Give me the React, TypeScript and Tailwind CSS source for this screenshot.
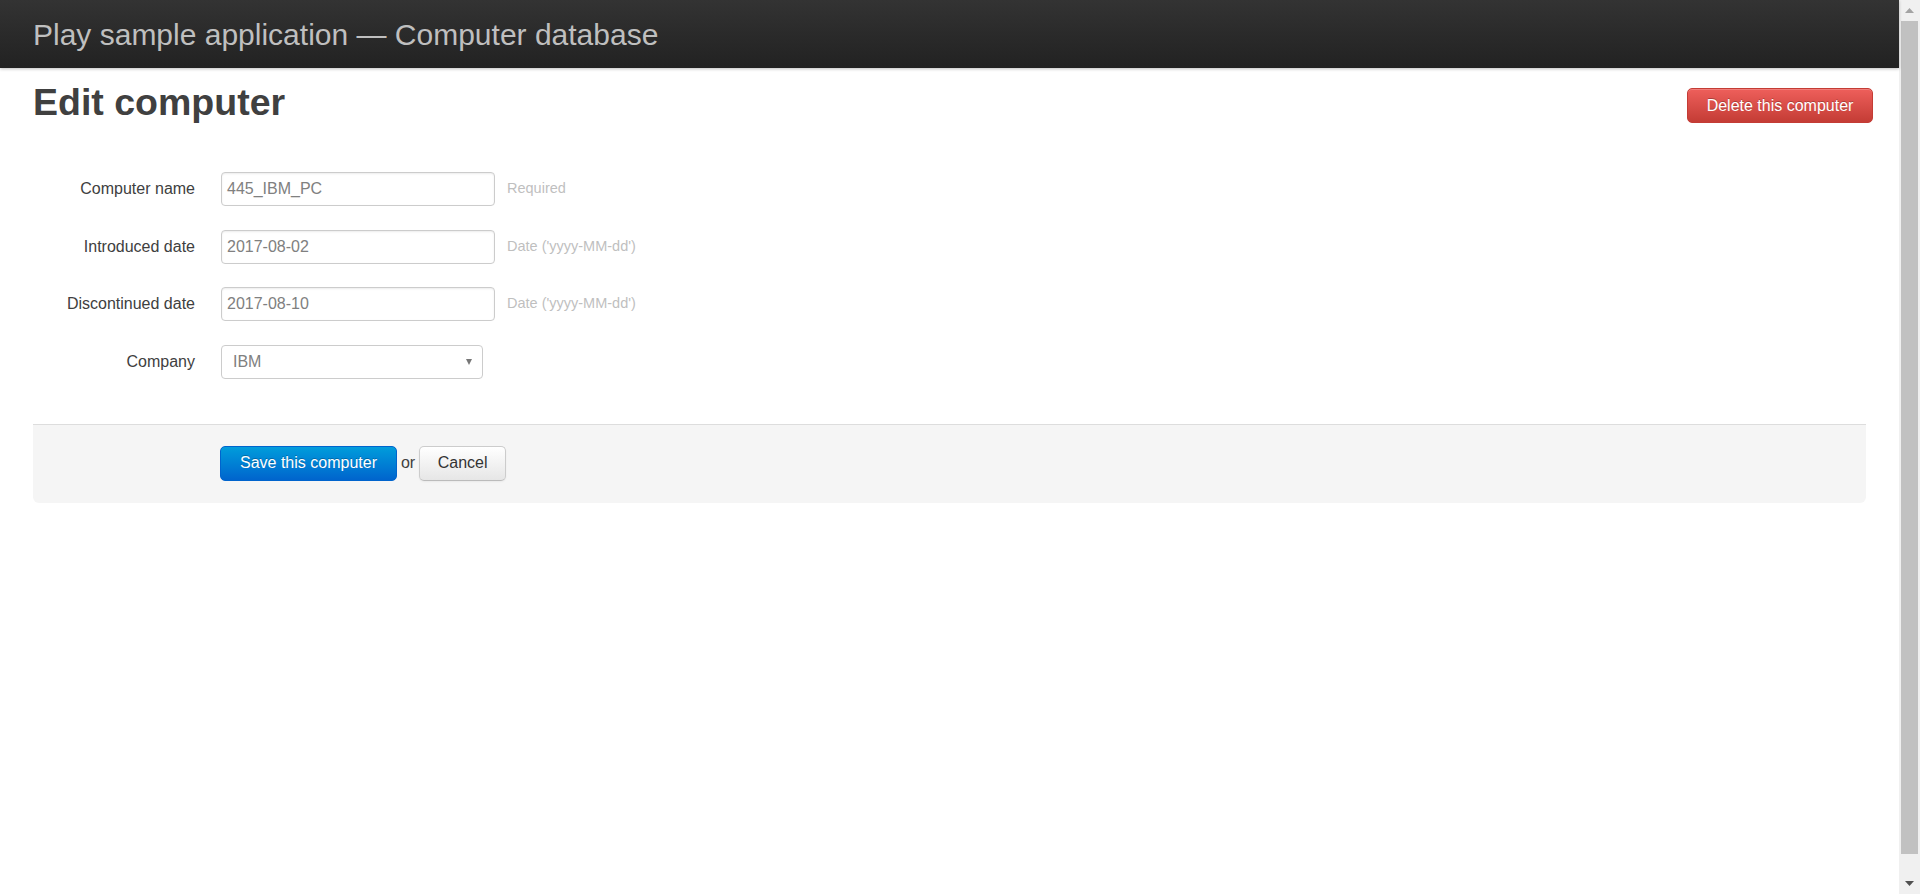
import { FC } from "react";

interface IFieldRow {
  label: string;
  value: string;
  help?: string;
}

const FieldRow: FC<IFieldRow> = ({ label, value, help }) => {
  return (
    <div className="flex items-center h-[34px] mb-[23.5px]">
      <label className="w-[162px] shrink-0 text-right text-[16px] text-[#404040]">{label}</label>
      <div className="ml-[26px] w-[274px] h-[34px] shrink-0 flex items-center px-[5px] border border-[#ccc] rounded-[4px] bg-white text-[16px] text-[#808080] shadow-[inset_0_1px_2px_rgba(0,0,0,0.08)]">
        {value}
      </div>
      {help && <span className="ml-[12px] text-[14.5px] text-[#bfbfbf]">{help}</span>}
    </div>
  );
};

const Scrollbar: FC = () => {
  return (
    <div className="w-[21px] shrink-0 h-full bg-[#f0f0f0] flex flex-col">
      <div className="h-[21px] flex items-center justify-center">
        <svg width="9" height="5" viewBox="0 0 9 5">
          <polygon points="4.5,0 9,5 0,5" fill="#a3a3a3" />
        </svg>
      </div>
      <div className="h-[833px] mx-[2px] bg-[#c1c1c1]" />
      <div className="flex-1" />
      <div className="h-[21px] flex items-center justify-center">
        <svg width="9" height="5" viewBox="0 0 9 5">
          <polygon points="0,0 9,0 4.5,5" fill="#505050" />
        </svg>
      </div>
    </div>
  );
};

const App: FC = () => {
  return (
    <div className="flex h-[894px] w-full overflow-hidden bg-white font-['Liberation_Sans',Arial,sans-serif]">
      <div className="flex-1 min-w-0 flex flex-col">
        <header className="relative z-10 h-[68px] shrink-0 flex items-center px-[33px] bg-gradient-to-b from-[#333333] to-[#222222] shadow-[0_1px_3px_rgba(0,0,0,0.25)]">
          <h1 className="text-[30px] font-normal text-[#bfbfbf]">Play sample application — Computer database</h1>
        </header>

        <main className="px-[33px]">
          <div className="flex justify-between items-start pt-[11.5px]">
            <h1 className="text-[37.5px] leading-[45px] font-bold text-[#404040]">Edit computer</h1>
            <button className="mt-[8.5px] -mr-[7px] h-[35px] w-[186px] rounded-[5px] border border-[#c43c35] bg-gradient-to-b from-[#ee5f5b] to-[#c43c35] text-[16px] text-white [text-shadow:0_-1px_0_rgba(0,0,0,0.25)] shadow-[inset_0_1px_0_rgba(255,255,255,0.2)]">
              Delete this computer
            </button>
          </div>

          <form className="mt-[47.5px]">
            <FieldRow label="Computer name" value="445_IBM_PC" help="Required" />
            <FieldRow label="Introduced date" value="2017-08-02" help="Date ('yyyy-MM-dd')" />
            <FieldRow label="Discontinued date" value="2017-08-10" help="Date ('yyyy-MM-dd')" />
            <div className="flex items-center h-[34px]">
              <label className="w-[162px] shrink-0 text-right text-[16px] text-[#404040]">Company</label>
              <div className="ml-[26px] w-[262px] h-[34px] shrink-0 flex items-center justify-between pl-[11px] pr-[10px] border border-[#ccc] rounded-[4px] bg-white text-[16px] text-[#808080]">
                <span>IBM</span>
                <svg width="6" height="6" viewBox="0 0 6 6">
                  <polygon points="0,0 6,0 3,6" fill="#777777" />
                </svg>
              </div>
            </div>

            <div className="mt-[45px] flex items-center pl-[187px] pt-[21px] pb-[22px] bg-[#f5f5f5] border-t border-[#ddd] rounded-b-[6px]">
              <button
                type="button"
                className="h-[35px] px-[19px] rounded-[5px] border border-[#0064cd] bg-gradient-to-b from-[#049cdb] to-[#0064cd] text-[16px] text-white [text-shadow:0_-1px_0_rgba(0,0,0,0.25)]"
              >
                Save this computer
              </button>
              <span className="mx-[4px] text-[16px] text-[#404040]">or</span>
              <button
                type="button"
                className="h-[35px] px-[17.5px] rounded-[5px] border border-[#ccc] border-b-[#bbb] bg-gradient-to-b from-white to-[#e6e6e6] text-[16px] text-[#333] shadow-[0_1px_2px_rgba(0,0,0,0.05)]"
              >
                Cancel
              </button>
            </div>
          </form>
        </main>
      </div>
      <Scrollbar />
    </div>
  );
};

export default App;
